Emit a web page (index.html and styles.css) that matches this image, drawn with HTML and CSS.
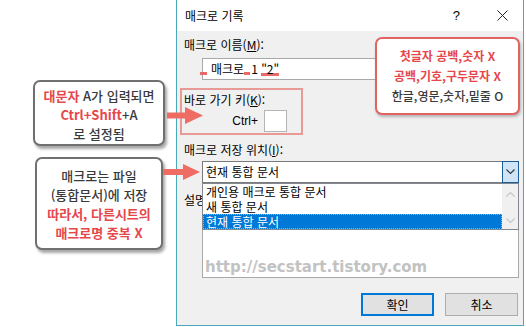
FILE: index.html
```html
<!DOCTYPE html>
<html lang="ko">
<head>
    <meta charset="UTF-8">
    <meta name="viewport" content="width=device-width, initial-scale=1.0">
    <title>매크로 기록</title>

    <link rel="stylesheet" href="styles.css">
</head>
<body>
    <div class="canvas">
        <div class="dialog">
            <div class="titlebar">
                <span class="title">매크로 기록</span>
                <span class="help">?</span>
                <svg class="close" width="11" height="11" viewBox="0 0 11 11">
                    <path d="M0.5 0.5 L10.5 10.5 M10.5 0.5 L0.5 10.5" stroke="#222" stroke-width="1" fill="none"/>
                </svg>
            </div>

            <div class="dialog-body">
                <div class="label">매크로 이름(<u>M</u>):</div>
                <div class="name-input"><span class="mark gap1"></span>매크로<span class="mark gap2"></span>1 <span class="mark-text">"2"</span></div>

                <div class="shortcut">
                    <div class="label">바로 가기 키(<u>K</u>):</div>
                    <div class="shortcut-row">
                        <span>Ctrl+</span>
                        <div class="key-input"></div>
                    </div>
                </div>

                <div class="label spaced">매크로 저장 위치(<u>I</u>):</div>
                <div class="combo">
                    <span class="combo-text">현재 통합 문서</span>
                    <div class="combo-button">
                        <svg width="9" height="6" viewBox="0 0 9 6">
                            <path d="M0.5 0.5 L4.5 4.5 L8.5 0.5" stroke="#333" stroke-width="1.1" fill="none"/>
                        </svg>
                    </div>

                    <div class="combo-list">
                        <div class="list-items">
                            <div class="list-item">개인용 매크로 통합 문서</div>
                            <div class="list-item">새 통합 문서</div>
                            <div class="list-item selected">현재 통합 문서</div>
                        </div>
                        <div class="list-scroll">
                            <svg width="9" height="6" viewBox="0 0 9 6">
                                <path d="M0.5 5.5 L4.5 1.5 L8.5 5.5" stroke="#c4c4c4" stroke-width="1.1" fill="none"/>
                            </svg>
                            <svg width="9" height="6" viewBox="0 0 9 6">
                                <path d="M0.5 0.5 L4.5 4.5 L8.5 0.5" stroke="#c4c4c4" stroke-width="1.1" fill="none"/>
                            </svg>
                        </div>
                    </div>
                </div>

                <div class="label desc-label">설명(<u>D</u>):</div>
                <div class="desc">
                    <span class="watermark">http://secstart.tistory.com</span>
                </div>

                <div class="buttons">
                    <div class="btn default">확인</div>
                    <div class="btn">취소</div>
                </div>
            </div>
        </div>

        <div class="note note-shortcut">
            <div><span class="red">대문자</span> A가 입력되면</div>
            <div><span class="red">Ctrl+Shift</span>+A</div>
            <div>로 설정됨</div>
        </div>

        <div class="note note-save">
            <div>매크로는 파일</div>
            <div>(통합문서)에 저장</div>
            <div class="red">따라서, 다른시트의</div>
            <div class="red">매크로명 중복 X</div>
        </div>

        <div class="note note-name">
            <div class="red">첫글자 공백,숫자 X</div>
            <div class="red">공백,기호,구두문자 X</div>
            <div>한글,영문,숫자,밑줄 O</div>
        </div>

        <svg class="arrow arrow-shortcut" width="36" height="17" viewBox="0 0 36 17">
            <polygon points="0,5.5 18,5.5 18,0 36,8.5 18,17 18,11.5 0,11.5" fill="#ee6c64"/>
        </svg>
        <svg class="arrow arrow-save" width="37" height="16" viewBox="0 0 37 16">
            <polygon points="0,5 20,5 20,0 37,8 20,16 20,11 0,11" fill="#ee6c64"/>
        </svg>
    </div>
</body>
</html>
```

FILE: styles.css
```css
body {
    margin: 0;
    padding: 0;
    background-color: #fff;
    font-family: "Noto Sans CJK KR", "Noto Sans", sans-serif;
    font-size: 12px;
    color: #000;
}

.canvas {
    position: relative;
    width: 526px;
    height: 327px;
    overflow: hidden;
}

/* dialog window */

.dialog {
    position: absolute;
    left: 176px;
    top: 0;
    width: 348px;
    height: 326px;
    box-sizing: border-box;
    border: 1px solid #4aa8bb;
    border-top: none;
    display: flex;
    flex-direction: column;
}

.titlebar {
    height: 31px;
    flex-shrink: 0;
    background-color: #fff;
    display: flex;
    align-items: center;
    padding: 0 15px 0 8px;
}

.title {
    flex: 1;
    line-height: 16px;
}

.help {
    font-family: "Liberation Sans", sans-serif;
    font-size: 13px;
    margin-right: 37px;
}

.dialog-body {
    flex: 1;
    background-color: #f0f0f0;
    padding: 6px 4px 0 7px;
}

.label {
    line-height: 16px;
    height: 16px;
}

.label.spaced {
    margin-top: 7px;
}

.label.desc-label {
    margin-top: 9px;
}

.name-input {
    margin: 5px 0 0 18px;
    height: 22px;
    box-sizing: border-box;
    border: 1px solid #a9a9a9;
    background-color: #fff;
    padding-left: 3px;
    line-height: 19px;
    white-space: pre;
}

.mark {
    display: inline-block;
    height: 3px;
    background-color: #ea6a6a;
    vertical-align: -1px;
}

.mark.gap1 {
    width: 7px;
    margin-left: -6px;
    margin-right: 4px;
}

.mark.gap2 {
    width: 6px;
    margin-right: 1px;
}

.mark-text {
    background: linear-gradient(#ea6a6a, #ea6a6a) 0 calc(100% - 1px) / 100% 3px no-repeat;
}

.shortcut {
    margin: 8px 0 0 -4px;
    width: 123px;
    box-sizing: border-box;
    border: 2px solid #e89a97;
    padding: 2px 0 1px 2px;
}

.shortcut-row {
    margin-top: 2px;
    height: 22px;
    display: flex;
    justify-content: flex-end;
    align-items: center;
    gap: 6px;
    padding-right: 14px;
}

.shortcut-row span {
    font-family: "Liberation Sans", sans-serif;
    font-size: 12px;
}

.key-input {
    width: 23px;
    height: 22px;
    box-sizing: border-box;
    border: 1px solid #b5b5b5;
    background-color: #fff;
}

.combo {
    position: relative;
    margin: 3px 0 0 18px;
    height: 22px;
    box-sizing: border-box;
    border: 1px solid #7a7a7a;
    background-color: #fff;
    display: flex;
    align-items: center;
}

.combo-text {
    flex: 1;
    padding-left: 3px;
    line-height: 16px;
}

.combo-button {
    width: 17px;
    height: 22px;
    margin: -1px -1px -1px 0;
    box-sizing: border-box;
    border: 1px solid #1d5d97;
    background-color: #cfe4f7;
    display: flex;
    align-items: center;
    justify-content: center;
}

.combo-list {
    position: absolute;
    left: -1px;
    right: -1px;
    top: 21px;
    height: 47px;
    box-sizing: border-box;
    border: 1px solid #828790;
    background-color: #fff;
    display: flex;
    z-index: 2;
}

.list-items {
    flex: 1;
}

.list-item {
    height: 15px;
    line-height: 15px;
    padding-left: 3px;
}

.list-item.selected {
    background-color: #0078d7;
    color: #fff;
    outline: 1px dotted #7fb6e6;
    outline-offset: -1px;
}

.list-scroll {
    width: 16px;
    background-color: #f0f0f0;
    display: flex;
    flex-direction: column;
    align-items: center;
    justify-content: space-between;
    padding: 7px 0 5px;
}

.desc {
    margin: 3px 0 0 18px;
    height: 67px;
    box-sizing: border-box;
    border: 1px solid #a9a9a9;
    background-color: #fff;
    display: flex;
    align-items: flex-end;
    padding: 0 2px 1px;
}

.watermark {
    font-family: "DejaVu Sans", sans-serif;
    font-weight: bold;
    font-size: 15px;
    line-height: 18px;
    color: #c2c2c2;
}

.buttons {
    margin-top: 15px;
    display: flex;
    justify-content: flex-end;
    gap: 11px;
    padding-right: 1px;
}

.btn {
    width: 73px;
    height: 23px;
    box-sizing: border-box;
    border: 1px solid #adadad;
    background-color: #e1e1e1;
    display: flex;
    align-items: center;
    justify-content: center;
}

.btn.default {
    border: 2px solid #0078d7;
}

/* annotations over the screenshot */

.note {
    position: absolute;
    box-sizing: border-box;
    background-color: #fff;
    border-radius: 7px;
    display: flex;
    flex-direction: column;
    justify-content: center;
    align-items: center;
    text-align: center;
    font-size: 13px;
    line-height: 19px;
    color: #3a3a3a;
    font-weight: 500;
    z-index: 3;
}

.note .red {
    color: #e5474b;
    font-weight: bold;
}

.note-shortcut {
    left: 33px;
    top: 80px;
    width: 132px;
    height: 66px;
    border: 2px solid #707070;
    box-shadow: 2px 3px 3px rgba(0, 0, 0, 0.35);
    padding-top: 3px;
}

.note-save {
    left: 35px;
    top: 157px;
    width: 128px;
    height: 93px;
    border: 2px solid #707070;
    box-shadow: 2px 3px 3px rgba(0, 0, 0, 0.35);
}

.note-name {
    left: 375px;
    top: 37px;
    width: 145px;
    height: 78px;
    border: 2px solid #e06464;
    box-shadow: 1px 2px 3px rgba(0, 0, 0, 0.25);
    font-size: 12px;
    line-height: 20px;
}

.arrow {
    position: absolute;
    z-index: 4;
}

.arrow-shortcut {
    left: 167px;
    top: 107px;
}

.arrow-save {
    left: 163px;
    top: 164px;
}
```
